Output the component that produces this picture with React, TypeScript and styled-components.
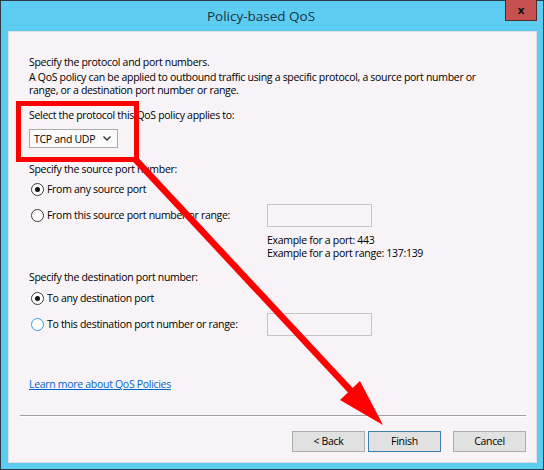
import React from 'react'
import styled, { createGlobalStyle } from 'styled-components'

const GlobalStyle = createGlobalStyle`
  html, body {
    margin: 0;
    padding: 0;
    background: #ffffff;
  }
  body {
    font-family: 'Open Sans', 'Noto Sans', sans-serif;
    font-size: 10.5px;
    letter-spacing: -0.3px;
    color: #000000;
  }
`

const S = {
  Window: styled.div`
    position: relative;
    width: 544px;
    height: 470px;
    box-sizing: border-box;
    background: #5ccdf1;
    border: 1px solid #2b3c46;
    display: flex;
    flex-direction: column;
  `,
  TitleBar: styled.div`
    height: 30px;
    display: flex;
    align-items: flex-start;
    padding-right: 6px;
  `,
  Title: styled.div`
    flex: 1;
    height: 30px;
    line-height: 30px;
    text-align: center;
    padding-left: 16px;
    font-size: 13.5px;
    letter-spacing: 0;
    color: #1c3242;
  `,
  Close: styled.div`
    margin-top: -1px;
    width: 32px;
    height: 21px;
    box-sizing: border-box;
    background: #c75050;
    border: 1px solid #4e2a2a;
    border-top: none;
    display: flex;
    align-items: center;
    justify-content: center;
    color: #111;
    font-family: 'DejaVu Sans', sans-serif;
    font-weight: bold;
    font-size: 11px;
    letter-spacing: 0;
  `,
  Panel: styled.div`
    flex: 1;
    margin: 0 6px 6px 7px;
    background: #f7f3f7;
    border: 1px solid #e2dee2;
    display: flex;
    flex-direction: column;
  `,
  Body: styled.div`
    padding: 24px 20px 0 20px;
    display: flex;
    flex-direction: column;
  `,
  Text: styled.div<{ $top?: number }>`
    margin-top: ${p => p.$top ?? 0}px;
    line-height: 13px;
    white-space: nowrap;
  `,
  Select: styled.div`
    margin-top: 7px;
    width: 89px;
    height: 19px;
    box-sizing: border-box;
    border: 1px solid #acacac;
    background: #fbfbfb;
    display: flex;
    align-items: center;
    justify-content: space-between;
    padding: 0 6px 0 4px;
  `,
  RadioRow: styled.div<{ $top: number; $tall?: boolean }>`
    margin-top: ${p => p.$top}px;
    height: ${p => (p.$tall ? 23 : 13)}px;
    display: grid;
    grid-template-columns: 238px 105px;
    align-items: center;
  `,
  Option: styled.div`
    display: flex;
    align-items: center;
    gap: 3px;
    padding-left: 2px;
    line-height: 13px;
    white-space: nowrap;
  `,
  Radio: styled.span<{ $checked?: boolean; $focus?: boolean }>`
    width: 13px;
    height: 13px;
    box-sizing: border-box;
    border-radius: 50%;
    border: 1px solid ${p => (p.$focus ? '#3c9be0' : '#3a3a3a')};
    background: #ffffff;
    display: flex;
    align-items: center;
    justify-content: center;
    &::after {
      content: '';
      display: ${p => (p.$checked ? 'block' : 'none')};
      width: 5px;
      height: 5px;
      border-radius: 50%;
      background: #111;
    }
  `,
  Field: styled.div`
    width: 105px;
    height: 23px;
    box-sizing: border-box;
    border: 1px solid #c4c4c4;
    background: #f7f3f7;
  `,
  Examples: styled.div`
    margin-top: 7px;
    margin-left: 238px;
    line-height: 13px;
  `,
  Link: styled.a`
    margin-top: 42px;
    line-height: 13px;
    color: #0066cc;
    text-decoration: underline;
    align-self: flex-start;
  `,
  Footer: styled.div`
    margin-top: auto;
    padding: 0 10px 10px 11px;
    display: flex;
    flex-direction: column;
  `,
  Separator: styled.div`
    height: 1px;
    background: #a0a0a0;
    border-bottom: 1px solid #ffffff;
  `,
  Buttons: styled.div`
    margin-top: 14px;
    display: flex;
    justify-content: flex-end;
  `,
  Button: styled.div<{ $focus?: boolean; $gap?: number }>`
    margin-left: ${p => p.$gap ?? 0}px;
    width: 73px;
    height: 21px;
    box-sizing: border-box;
    border: 1px solid ${p => (p.$focus ? '#3c7fb1' : '#adadad')};
    background: #e1e1e1;
    display: flex;
    align-items: center;
    justify-content: center;
    line-height: 13px;
  `,
  Overlay: styled.svg`
    position: absolute;
    left: -1px;
    top: -1px;
    pointer-events: none;
  `,
}

function Chevron() {
  return (
    <svg width="8" height="5" viewBox="0 0 8 5">
      <polyline points="0.5,0.5 4,4 7.5,0.5" fill="none" stroke="#333" strokeWidth="1.4" />
    </svg>
  )
}

export default function App() {
  return (
    <>
      <GlobalStyle />
      <S.Window>
        <S.TitleBar>
          <S.Title>Policy-based QoS</S.Title>
          <S.Close>x</S.Close>
        </S.TitleBar>
        <S.Panel>
          <S.Body>
            <S.Text>Specify the protocol and port numbers.</S.Text>
            <S.Text $top={2}>
              A QoS policy can be applied to outbound traffic using a specific protocol, a source port number or
              <br />
              range, or a destination port number or range.
            </S.Text>
            <S.Text $top={12}>Select the protocol this QoS policy applies to:</S.Text>
            <S.Select>
              <span>TCP and UDP</span>
              <Chevron />
            </S.Select>
            <S.Text $top={15}>Specify the source port number:</S.Text>
            <S.RadioRow $top={7}>
              <S.Option>
                <S.Radio $checked />
                From any source port
              </S.Option>
            </S.RadioRow>
            <S.RadioRow $top={8} $tall>
              <S.Option>
                <S.Radio />
                From this source port number or range:
              </S.Option>
              <S.Field />
            </S.RadioRow>
            <S.Examples>
              Example for a port: 443
              <br />
              Example for a port range: 137:139
            </S.Examples>
            <S.Text $top={11}>Specify the destination port number:</S.Text>
            <S.RadioRow $top={8}>
              <S.Option>
                <S.Radio $checked />
                To any destination port
              </S.Option>
            </S.RadioRow>
            <S.RadioRow $top={8} $tall>
              <S.Option>
                <S.Radio $focus />
                To this destination port number or range:
              </S.Option>
              <S.Field />
            </S.RadioRow>
            <S.Link href="#">Learn more about QoS Policies</S.Link>
          </S.Body>
          <S.Footer>
            <S.Separator />
            <S.Buttons>
              <S.Button>&lt; Back</S.Button>
              <S.Button $focus $gap={3}>Finish</S.Button>
              <S.Button $gap={12}>Cancel</S.Button>
            </S.Buttons>
          </S.Footer>
        </S.Panel>
        <S.Overlay width="544" height="470" viewBox="0 0 544 470">
          <rect x="18.5" y="103.5" width="118" height="56" fill="none" stroke="#ff0000" strokeWidth="5" />
          <line x1="134" y1="158" x2="352" y2="392" stroke="#ff0000" strokeWidth="6.5" />
          <polygon points="383,425 340,400 360,381" fill="#ff0000" />
        </S.Overlay>
      </S.Window>
    </>
  )
}
